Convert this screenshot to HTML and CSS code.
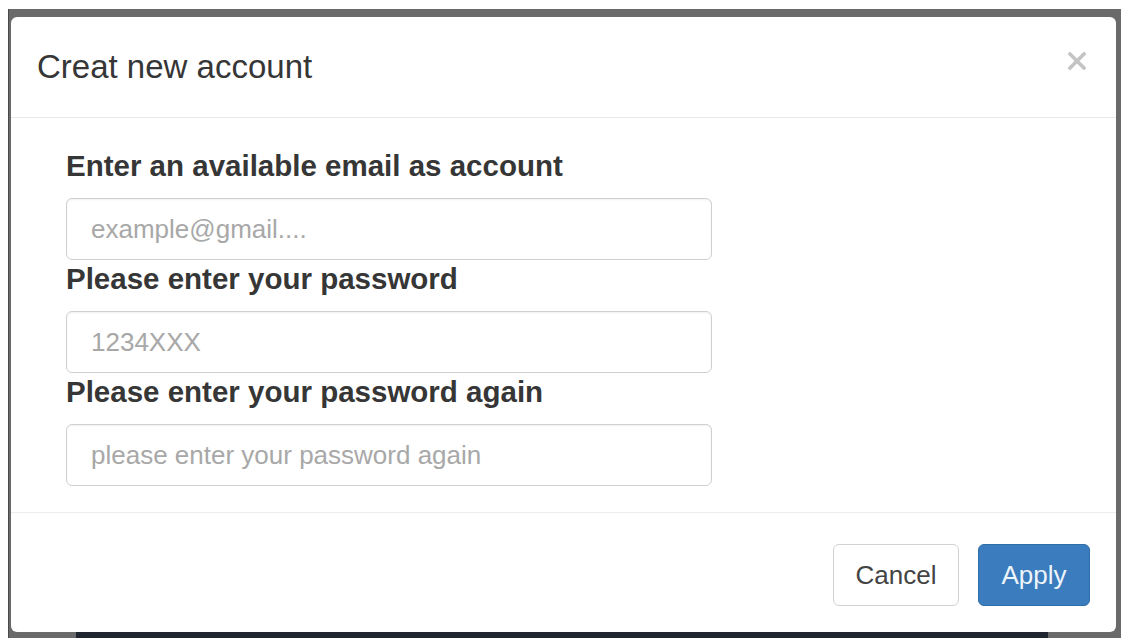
FILE: index.html
```html
<!DOCTYPE html>
<html lang="en">
<head>
<meta charset="utf-8">
<title>Creat new account</title>
<link rel="stylesheet" href="styles.css">
</head>
<body>
<div class="frame">
  <div class="modal">
    <div class="modal-header">
      <h4 class="modal-title">Creat new account</h4>
      <button class="close" type="button" aria-label="Close">
        <svg width="18" height="18" viewBox="0 0 18 18"><path d="M2 2 L16 16 M16 2 L2 16" stroke="#c4c4c4" stroke-width="3.6" stroke-linecap="square"/></svg>
      </button>
    </div>
    <div class="modal-body">
      <div class="group">
        <label class="label">Enter an available email as account</label>
        <input class="input" type="text" placeholder="example@gmail....">
      </div>
      <div class="group">
        <label class="label">Please enter your password</label>
        <input class="input" type="text" placeholder="1234XXX">
      </div>
      <div class="group">
        <label class="label">Please enter your password again</label>
        <input class="input" type="text" placeholder="please enter your password again">
      </div>
    </div>
    <div class="modal-footer">
      <button class="btn btn-default" type="button">Cancel</button>
      <button class="btn btn-primary" type="button">Apply</button>
    </div>
  </div>
</div>
</body>
</html>
```
FILE: styles.css
```css
html, body {
  background: #ffffff;
}
body {
  margin: 9px 8px 0 8px;
  font-family: "Liberation Sans", Arial, sans-serif;
  color: #333333;
}
.frame {
  background:
    linear-gradient(#1f262f, #1f262f) 67px 100% / calc(100% - 140px) 6px no-repeat,
    #6a6a6a;
  border-left: 1px solid #4a4a4a;
  padding: 8px 5px 6px 2px;
}
.modal {
  background: #ffffff;
  border-radius: 6px;
  display: flex;
  flex-direction: column;
}
.modal-header {
  display: flex;
  align-items: center;
  justify-content: space-between;
  padding: 30px 29px 31px 26px;
  border-bottom: 1px solid #e8e8e8;
  height: 39px;
}
.modal-title {
  margin: 0;
  font-size: 33px;
  font-weight: normal;
  line-height: 38px;
  color: #363636;
}
.close {
  border: 0;
  background: transparent;
  padding: 0;
  width: 18px;
  height: 18px;
  display: flex;
  margin-top: -12px;
  margin-right: 1px;
}
.modal-body {
  padding: 31px 55px 26px 55px;
  display: flex;
  flex-direction: column;
  gap: 2px;
  border-bottom: 1px solid #ececec;
}
.group {
  display: flex;
  flex-direction: column;
}
.label {
  font-size: 29.5px;
  font-weight: bold;
  line-height: 34px;
  color: #363636;
  margin-bottom: 15px;
}
.input {
  box-sizing: border-box;
  width: 646px;
  height: 62px;
  border: 1px solid #d0d0d0;
  border-radius: 6px;
  padding: 0 24px;
  font-family: "Liberation Sans", Arial, sans-serif;
  font-size: 26px;
  color: #555555;
  box-shadow: inset 0 1px 2px rgba(0,0,0,0.06);
  outline: none;
  background: #ffffff;
}
.input::placeholder {
  color: #a8a8a8;
}
.modal-footer {
  display: flex;
  justify-content: flex-end;
  gap: 19px;
  padding: 31px 26px 26px 26px;
}
.btn {
  box-sizing: border-box;
  height: 62px;
  border-radius: 6px;
  font-family: "Liberation Sans", Arial, sans-serif;
  font-size: 26px;
  padding: 0;
}
.btn-default {
  width: 126px;
  background: #ffffff;
  border: 1px solid #d2d2d2;
  color: #444444;
}
.btn-primary {
  width: 112px;
  background: #3a7cbd;
  border: 1px solid #2f6ea8;
  color: #eef4fb;
}
```
